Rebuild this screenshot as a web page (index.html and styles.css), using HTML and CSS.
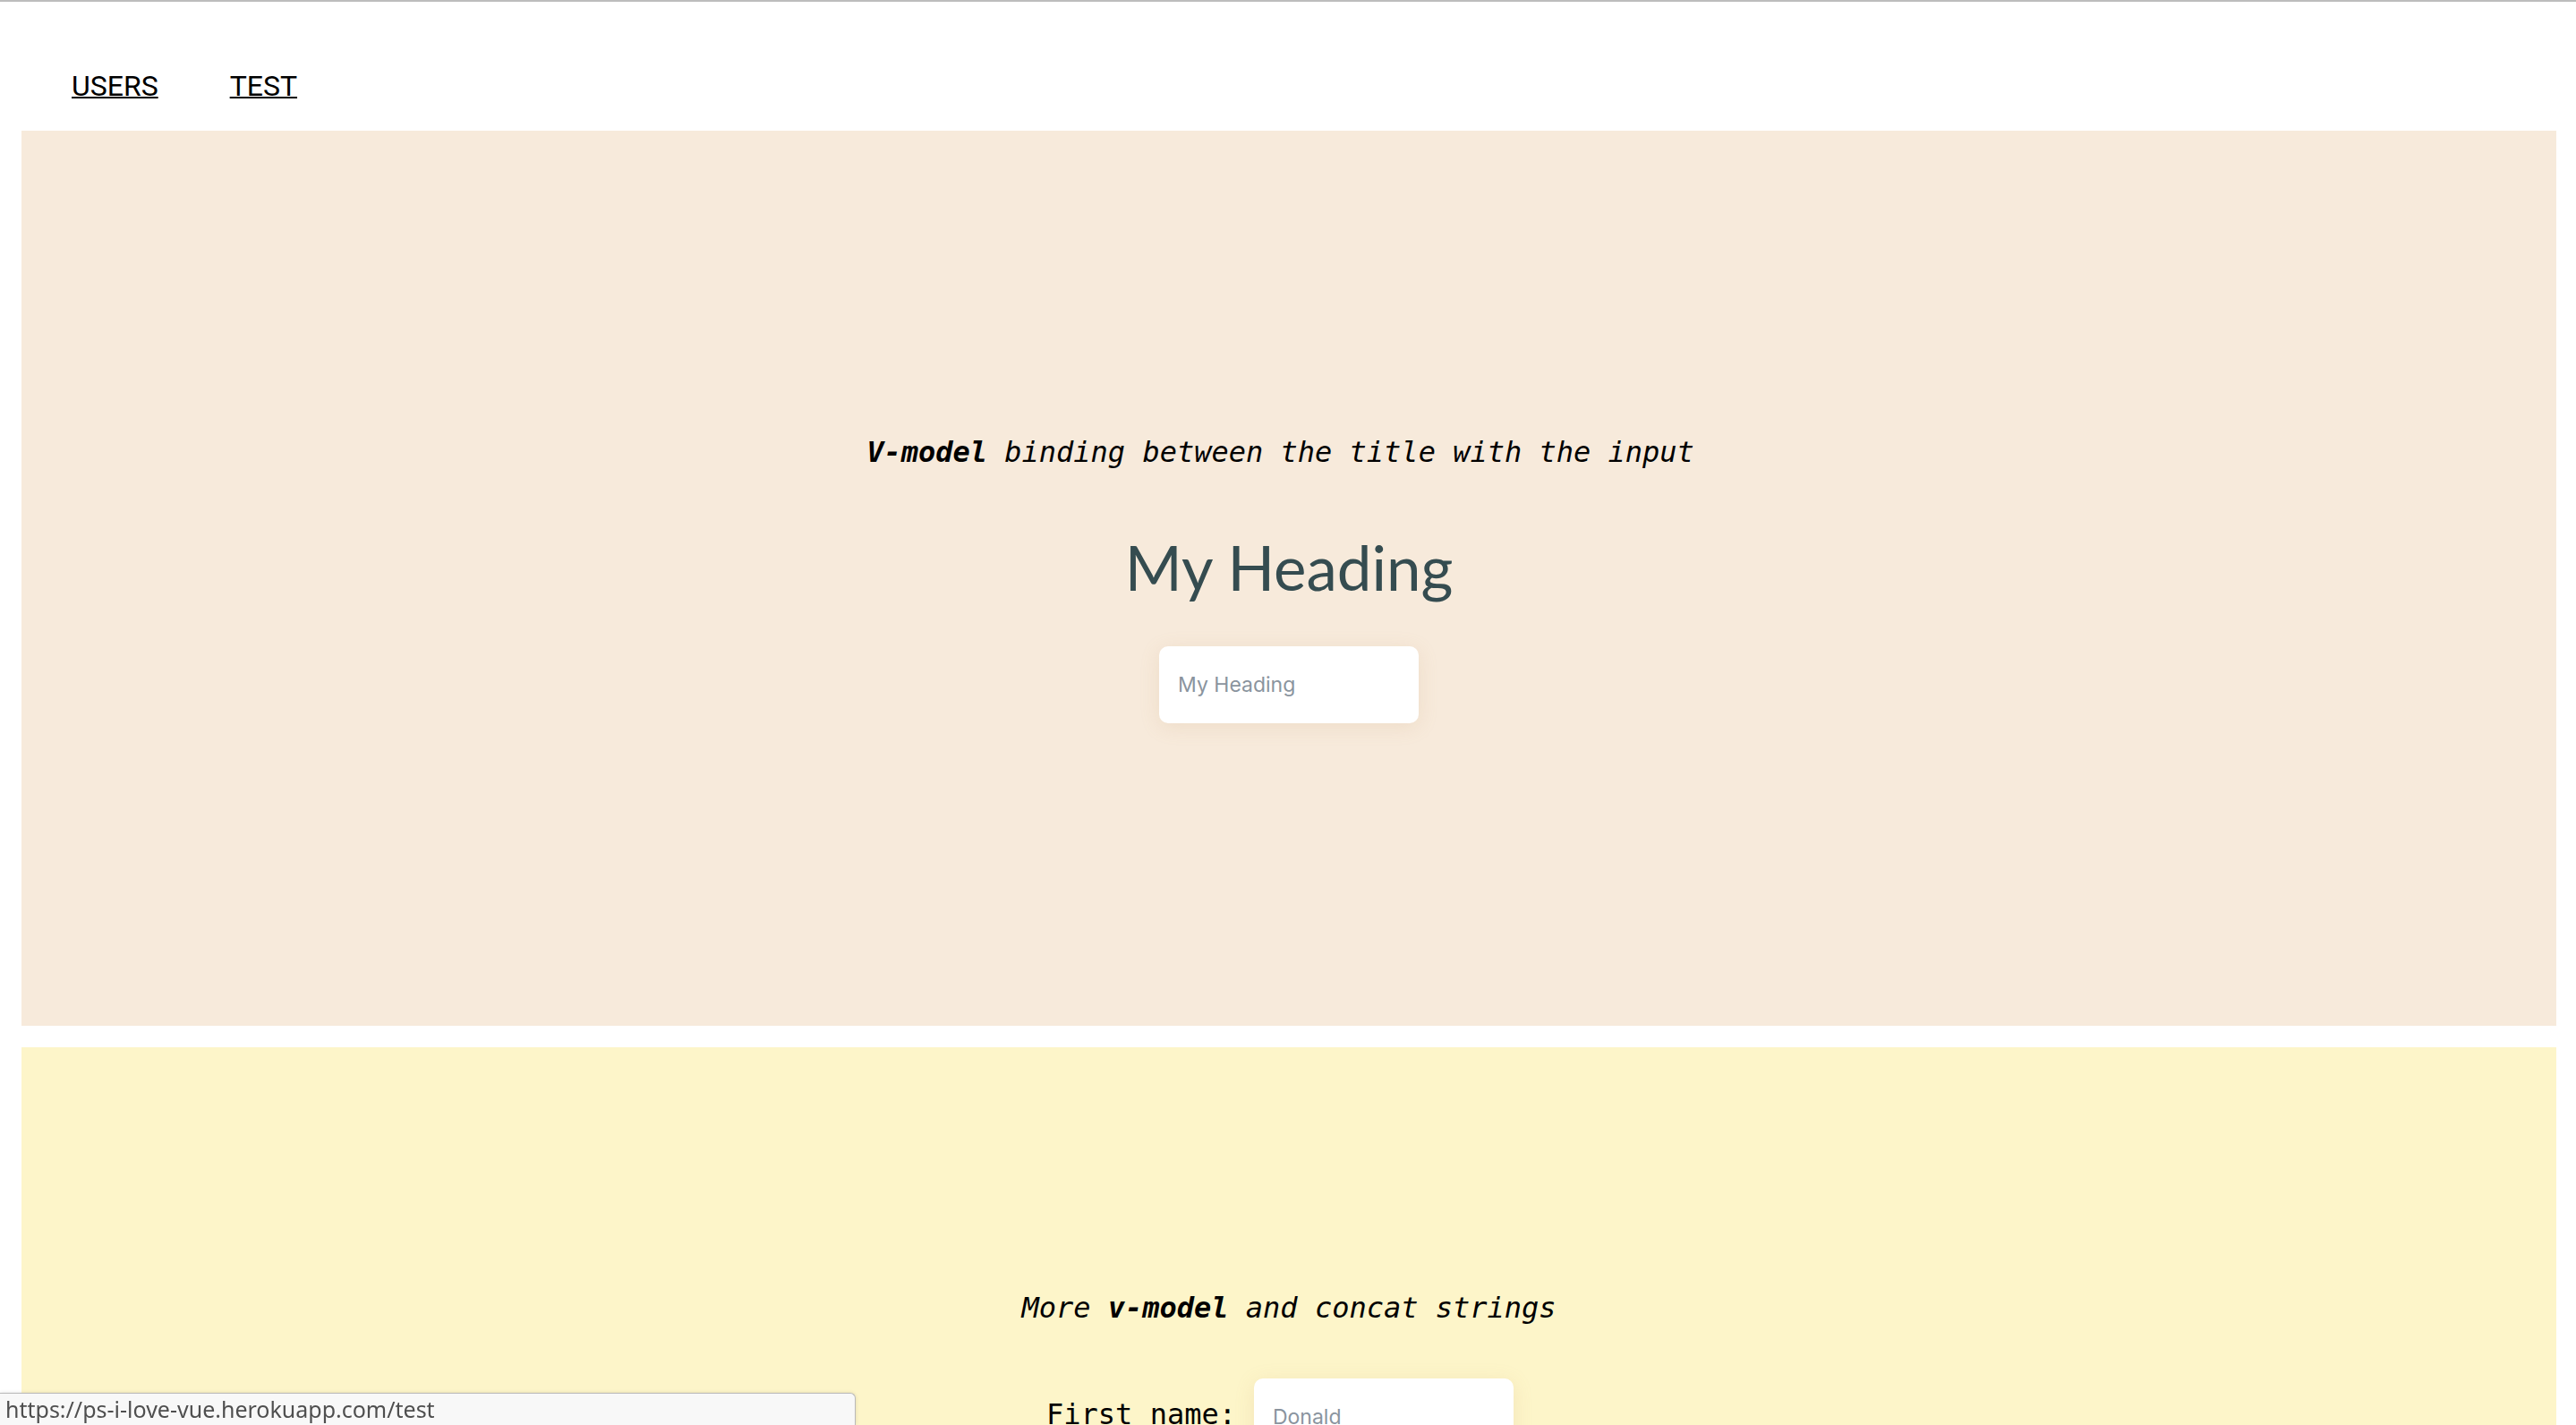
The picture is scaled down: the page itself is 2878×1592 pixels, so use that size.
FILE: index.html
```html
<!DOCTYPE html>
<html lang="en">
<head>
<meta charset="utf-8">
<title>ps-i-love-vue</title>
<link rel="stylesheet" href="styles.css">
</head>
<body>
<div class="topline"></div>
<nav class="nav">
  <a class="nav-link" href="#users">Users</a>
  <a class="nav-link" href="#test">Test</a>
</nav>
<main class="page">
  <section class="panel panel--beige">
    <p class="lead lead--first"><b>V-model</b> binding between the title with the input</p>
    <h1 class="title">My Heading</h1>
    <input class="field" type="text" value="My Heading">
  </section>
  <section class="panel panel--yellow panel--top">
    <p class="lead">More <b>v-model</b> and concat strings</p>
    <div class="row">
      <label class="row-label">First name:</label>
      <input class="field field--row" type="text" value="Donald">
    </div>
  </section>
</main>
<div class="statusbar">https://ps-i-love-vue.herokuapp.com/test</div>
</body>
</html>
```
FILE: styles.css
```css
html, body {
  margin: 0;
  padding: 0;
  background: #ffffff;
}

body {
  font-family: "Liberation Sans", Arial, sans-serif;
  color: #000;
  overflow: hidden;
}

.topline {
  height: 2px;
  background: #bdbdbd;
}

.nav {
  display: flex;
  gap: 80px;
  padding: 74px 0 30px 80px;
}

.nav-link {
  font-family: Roboto, "Liberation Sans", sans-serif;
  font-size: 32px;
  line-height: 40px;
  text-transform: uppercase;
  color: #000;
  text-decoration: underline;
  text-decoration-thickness: 2px;
}

.page {
  display: flex;
  flex-direction: column;
  gap: 24px;
  padding: 0 22px 0 24px;
}

.panel {
  height: 1000px;
  box-sizing: border-box;
  display: flex;
  flex-direction: column;
  align-items: center;
  justify-content: center;
  flex-shrink: 0;
}

.panel--beige {
  background: #f7eadb;
}

.panel--yellow {
  background: #fdf5c9;
}

.panel--top {
  justify-content: flex-start;
  padding-top: 271px;
}

.lead {
  margin: 0;
  font-family: "DejaVu Sans Mono", "Liberation Mono", monospace;
  font-style: italic;
  font-size: 32px;
  line-height: 40px;
  color: #000;
}

.lead b {
  font-weight: bold;
}

.lead--first {
  padding-right: 19px;
}

.title {
  margin: 75px 0 54px;
  font-family: Lato, "Noto Sans", sans-serif;
  font-weight: 400;
  font-size: 69px;
  line-height: 68px;
  color: #354c50;
}

.field {
  box-sizing: border-box;
  width: 290px;
  height: 86px;
  padding: 0 21px;
  border: none;
  border-radius: 10px;
  background: #ffffff;
  box-shadow: 0 4px 22px rgba(190, 150, 100, 0.16);
  font-family: Inter, "Noto Sans", sans-serif;
  font-size: 23px;
  color: #8a949e;
  outline: none;
}

.row {
  margin-top: 59px;
  display: flex;
  align-items: baseline;
  gap: 20px;
  padding-right: 20px;
}

.row-label {
  font-family: "DejaVu Sans Mono", "Liberation Mono", monospace;
  font-size: 32px;
  line-height: 40px;
  color: #000;
}

.statusbar {
  position: fixed;
  left: 0;
  bottom: 0;
  width: 956px;
  height: 36px;
  box-sizing: border-box;
  padding-left: 6px;
  background: #f8f8f8;
  border-top: 1px solid #b9b9b9;
  border-right: 1px solid #b9b9b9;
  border-top-right-radius: 6px;
  box-shadow: 0 0 4px rgba(0, 0, 0, 0.12);
  font-family: "Noto Sans", "Liberation Sans", sans-serif;
  font-size: 25px;
  line-height: 34px;
  color: #4f4f4f;
}
```
